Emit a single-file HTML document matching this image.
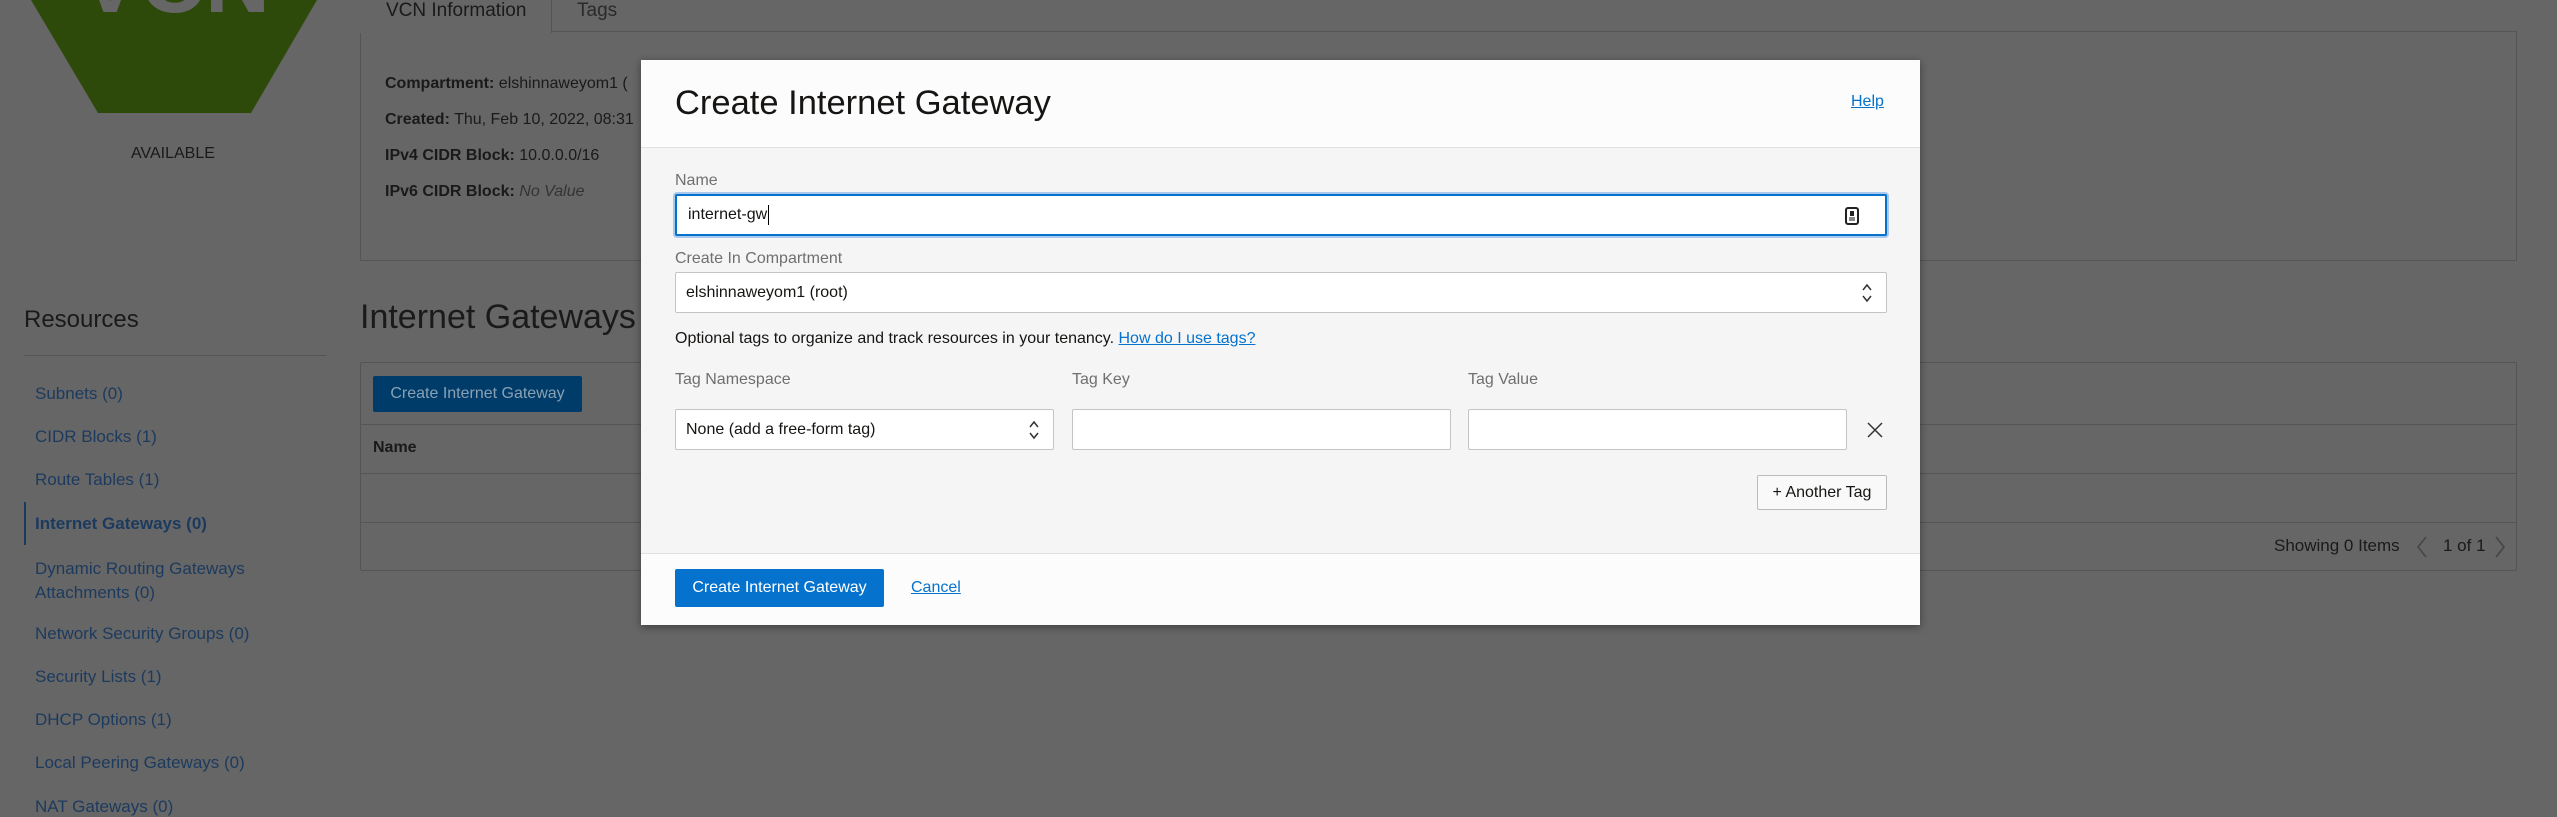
<!DOCTYPE html>
<html><head><meta charset="utf-8"><style>
*{box-sizing:border-box;margin:0;padding:0}
body{width:2557px;height:817px;overflow:hidden;background:#666;font-family:"Liberation Sans",Arial,sans-serif;position:relative;color:#1a1a1a}
.a{position:absolute;white-space:nowrap}
.lnk{color:#1c3a5e;font-size:17px}
.m{position:absolute;left:641px;top:60px;width:1279px;height:565px;background:#f5f5f5;box-shadow:0 2px 8px rgba(0,0,0,.4)}
.lbl{position:absolute;font-size:16px;color:#6f6f6f}
.inp{position:absolute;background:#fff;border:1px solid #c4c4c4;border-radius:2px;font-size:16px;color:#161513;padding-left:10px;display:flex;align-items:center}
</style></head><body>
<svg class="a" style="left:0;top:0" width="340" height="120"><polygon points="31,0 317,0 251,113 98,113" fill="#2e4a0b"/><text x="80" y="12" font-family="Liberation Sans" font-weight="bold" font-size="90" fill="#666">VCN</text></svg>
<div class="a" style="left:131px;top:145px;font-size:16px">AVAILABLE</div>
<div class="a" style="left:360px;top:31px;width:2157px;height:230px;border:1px solid #555"></div>
<div class="a" style="left:360px;top:0;width:192px;height:33px;background:#666;border-right:1px solid #555"></div>
<div class="a" style="left:386px;top:0;font-size:19px">VCN Information</div>
<div class="a" style="left:577px;top:0;font-size:19px;color:#2a2a2a">Tags</div>
<div class="a" style="left:385px;top:75px;font-size:16px"><b>Compartment:</b> elshinnaweyom1 (</div>
<div class="a" style="left:385px;top:111px;font-size:16px"><b>Created:</b> Thu, Feb 10, 2022, 08:31</div>
<div class="a" style="left:385px;top:147px;font-size:16px"><b>IPv4 CIDR Block:</b> 10.0.0.0/16</div>
<div class="a" style="left:385px;top:183px;font-size:16px"><b>IPv6 CIDR Block:</b> <i style="color:#333">No Value</i></div>
<div class="a" style="left:24px;top:306px;font-size:24px">Resources</div>
<div class="a" style="left:24px;top:355px;width:302px;height:1px;background:#555"></div>
<div class="a lnk" style="left:35px;top:384px">Subnets (0)</div>
<div class="a lnk" style="left:35px;top:427px">CIDR Blocks (1)</div>
<div class="a lnk" style="left:35px;top:470px">Route Tables (1)</div>
<div class="a" style="left:24px;top:502px;width:2px;height:43px;background:#1c3a5e"></div>
<div class="a lnk" style="left:35px;top:514px;font-weight:bold">Internet Gateways (0)</div>
<div class="a lnk" style="left:35px;top:557px;line-height:24px">Dynamic Routing Gateways<br>Attachments (0)</div>
<div class="a lnk" style="left:35px;top:624px">Network Security Groups (0)</div>
<div class="a lnk" style="left:35px;top:667px">Security Lists (1)</div>
<div class="a lnk" style="left:35px;top:710px">DHCP Options (1)</div>
<div class="a lnk" style="left:35px;top:753px">Local Peering Gateways (0)</div>
<div class="a lnk" style="left:35px;top:797px">NAT Gateways (0)</div>
<div class="a" style="left:360px;top:298px;font-size:34px">Internet Gateways</div>
<div class="a" style="left:360px;top:362px;width:2157px;height:209px;border:1px solid #555;border-radius:2px"></div>
<div class="a" style="left:360px;top:424px;width:2157px;height:1px;background:#555"></div>
<div class="a" style="left:360px;top:473px;width:2157px;height:1px;background:#555"></div>
<div class="a" style="left:360px;top:522px;width:2157px;height:1px;background:#555"></div>
<div class="a" style="left:373px;top:376px;width:209px;height:36px;background:#003c6a;border-radius:2px;color:#8aa0b3;font-size:16px;line-height:36px;text-align:center">Create Internet Gateway</div>
<div class="a" style="left:373px;top:439px;font-size:16px;font-weight:bold">Name</div>
<div class="a" style="left:2274px;top:536px;font-size:17px">Showing 0 Items</div>
<div class="a" style="left:2443px;top:536px;font-size:17px">1 of 1</div>
<svg class="a" style="left:2412px;top:534px" width="110" height="26"><path d="M14 3 L6 13 L14 23" stroke="#444" fill="none" stroke-width="1.5"/><path d="M84 3 L92 13 L84 23" stroke="#444" fill="none" stroke-width="1.5"/></svg>
<div class="m">
 <div class="a" style="left:0;top:0;width:1279px;height:88px;background:#fcfcfc;border-bottom:1px solid #e0e0e0"></div>
 <div class="a" style="left:34px;top:24px;font-size:34.5px;color:#161513">Create Internet Gateway</div>
 <div class="a" style="left:1210px;top:33px;font-size:16px;color:#0572ce;text-decoration:underline">Help</div>
 <div class="lbl" style="left:34px;top:112px">Name</div>
 <div class="inp" style="left:34px;top:134px;width:1212px;height:42px;border:2px solid #0572ce;box-shadow:0 0 0 2px #a9c9ec;padding-left:11px">internet-gw<span style="display:inline-block;width:1px;height:20px;background:#000;margin-left:1px"></span></div>
 <svg class="a" style="left:1204px;top:147px" width="14" height="18"><rect x="1" y="1" width="12" height="16" rx="2" fill="#fff" stroke="#222" stroke-width="2"/><rect x="5" y="4" width="4" height="5" fill="#222"/><rect x="4" y="10" width="6" height="4" fill="#888"/></svg>
 <div class="lbl" style="left:34px;top:190px">Create In Compartment</div>
 <div class="inp" style="left:34px;top:212px;width:1212px;height:41px">elshinnaweyom1 (root)</div>
 <svg class="a" style="left:1220px;top:222px" width="12" height="22"><path d="M2 8 L6 3 L10 8 M2 14 L6 19 L10 14" stroke="#333" fill="none" stroke-width="1.5"/></svg>
 <div class="a" style="left:34px;top:270px;font-size:16px;color:#161513">Optional tags to organize and track resources in your tenancy. <span style="color:#0572ce;text-decoration:underline">How do I use tags?</span></div>
 <div class="lbl" style="left:34px;top:311px">Tag Namespace</div>
 <div class="lbl" style="left:431px;top:311px">Tag Key</div>
 <div class="lbl" style="left:827px;top:311px">Tag Value</div>
 <div class="inp" style="left:34px;top:349px;width:379px;height:41px">None (add a free-form tag)</div>
 <svg class="a" style="left:387px;top:359px" width="12" height="22"><path d="M2 8 L6 3 L10 8 M2 14 L6 19 L10 14" stroke="#333" fill="none" stroke-width="1.5"/></svg>
 <div class="inp" style="left:431px;top:349px;width:379px;height:41px"></div>
 <div class="inp" style="left:827px;top:349px;width:379px;height:41px"></div>
 <svg class="a" style="left:1225px;top:361px" width="18" height="18"><path d="M2 2 L16 16 M16 2 L2 16" stroke="#333" stroke-width="1.5"/></svg>
 <div class="a" style="left:1116px;top:415px;width:130px;height:35px;background:#f9f9f9;border:1px solid #bbb;border-radius:2px;font-size:16px;line-height:33px;text-align:center;color:#161513">+ Another Tag</div>
 <div class="a" style="left:0;top:493px;width:1279px;height:72px;background:#fcfcfc;border-top:1px solid #e0e0e0"></div>
 <div class="a" style="left:34px;top:509px;width:209px;height:38px;background:#0572ce;border-radius:2px;color:#fff;font-size:16px;line-height:38px;text-align:center">Create Internet Gateway</div>
 <div class="a" style="left:270px;top:519px;font-size:16px;color:#0572ce;text-decoration:underline">Cancel</div>
</div>
</body></html>
